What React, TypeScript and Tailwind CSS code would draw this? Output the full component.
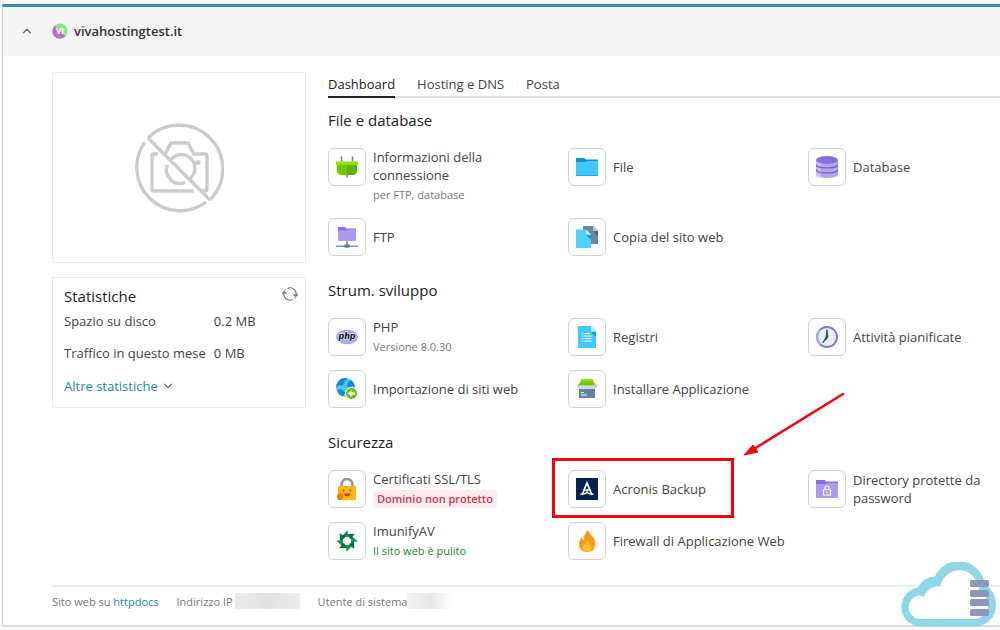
import React from 'react';
import { ChevronDown, ChevronUp } from 'lucide-react';

const PlugIcon = () => (
  <svg viewBox="0 0 22 22" className="w-[22px] h-[22px]">
    <path d="M5.500 0.500v5M16.500 0.500v5M11 18v3.500" stroke="#6f85a8" strokeWidth="1.600" />
    <path d="M1 9h20v6q0 3-4 4H5q-4-1-4-4z" fill="#72c800" />
    <path d="M11 9h10v6q0 3-4 4h-6z" fill="#62b300" />
    <path d="M0 5.500h22V9H0z" fill="#8be300" />
  </svg>
);

const FolderIcon = () => (
  <svg viewBox="0 0 22 22" className="w-[22px] h-[22px]">
    <path d="M0 2h8.500l1.500 1.500h12V8H0z" fill="#0d93dd" />
    <path d="M0 6h9l1.500-1H22v15H0z" fill="#40c8ff" />
    <path d="M0 19h22v1H0z" fill="#28a4df" />
  </svg>
);

const DatabaseIcon = () => (
  <svg viewBox="0 0 22 22" className="w-[22px] h-[22px]">
    <path d="M0 4v14.500C0 20.500 5 22 11 22s11-1.500 11-3.500V4z" fill="#b4a2f2" />
    <path d="M0 4v14.500C0 20 2 21 5 21.500V4z" fill="#cbbcff" />
    <path d="M0 8.500c0 4.500 22 4.500 22 0M0 13.500c0 4.500 22 4.500 22 0" fill="none" stroke="#7361c7" strokeWidth="1.400" />
    <ellipse cx="11" cy="4" rx="11" ry="3.900" fill="#8770dd" />
  </svg>
);

const FtpIcon = () => (
  <svg viewBox="0 0 22 22" className="w-[22px] h-[22px]">
    <path d="M2 1h7l1.500 1.500H20V7H2z" fill="#8770dd" />
    <path d="M2 4.500h8l1-1h9V15H2z" fill="#ad9bf0" />
    <path d="M11 15v4M0 20.300h22" stroke="#7c96b3" strokeWidth="1.600" />
    <path d="M8.500 18.500h5v3.200h-5z" fill="#617a98" />
  </svg>
);

const CopyIcon = () => (
  <svg viewBox="0 0 22 22" className="w-[22px] h-[22px]">
    <path d="M7 0h10l5 5v13H7z" fill="#71839f" />
    <path d="M17 5h5v6z" fill="#526580" />
    <path d="M17 0l5 5h-5z" fill="#b8c5d8" />
    <path d="M0 3.500h10l5 5V22H0z" fill="#4dd1ff" />
    <path d="M10 9h5v5z" fill="#159bd4" />
    <path d="M10 3.500l5 5h-5z" fill="#c5f0ff" />
  </svg>
);

const PhpIcon = () => (
  <svg viewBox="0 0 22 22" className="w-[22px] h-[22px]">
    <ellipse cx="11" cy="11" rx="11" ry="7.300" fill="#a5aaf3" />
    <text x="11" y="13" textAnchor="middle" fontSize="8" fontWeight="700" fontStyle="italic" fontFamily="'DejaVu Sans', sans-serif" fill="#111" stroke="#fff" strokeWidth="0.800" paintOrder="stroke">
      php
    </text>
  </svg>
);

const LogIcon = () => (
  <svg viewBox="0 0 22 22" className="w-[22px] h-[22px]">
    <path d="M2 0h13l5 5v17H2z" fill="#40c8ff" />
    <path d="M15 6h5v5z" fill="#1a94d1" />
    <path d="M15 0l5 5.500h-5z" fill="#bcebff" />
    <path d="M8.500 7.500h5M8.500 10h7M8.500 12.500h7M8.500 15h7" stroke="#fff" strokeWidth="1" />
    <path d="M6 7.500h1.200M6 10h1.200M6 12.500h1.200M6 15h1.200" stroke="#fff" strokeWidth="1" />
  </svg>
);

const ClockIcon = () => (
  <svg viewBox="0 0 22 22" className="w-[22px] h-[22px]">
    <circle cx="11" cy="11" r="10" fill="#e9effa" stroke="#8672d8" strokeWidth="1.900" />
    <path d="M4 18A10 10 0 0 1 4 4" fill="none" stroke="#b3a2f3" strokeWidth="1.900" />
    <path d="M11 3.500l1 7.500-1 1.500-4.500 4.500L10 11z" fill="#34475f" stroke="#34475f" strokeWidth="0.800" />
  </svg>
);

const GlobeIcon = () => (
  <svg viewBox="0 0 22 22" className="w-[22px] h-[22px]">
    <circle cx="9.500" cy="9.500" r="9.500" fill="#4cc7fb" />
    <path d="M3 2.500Q6-.5 10 0l1 2-3 1 1 2-3 3-3-1-2 2-.8-1Q1 4.500 3 2.500zM12 4l3-2q3 2 4 7l-3-1-2 2-3-2zM3 11l4 1 2 3-2 3.500Q3 17 1.500 13z" fill="#1c88cf" />
    <circle cx="15.500" cy="15.500" r="6" fill="#6dc20a" stroke="#fff" strokeWidth="1" />
    <path d="M11.800 15.500l3.700-3.200v2h3.500v2.400h-3.500v2z" fill="#fff" />
  </svg>
);

const BoxIcon = () => (
  <svg viewBox="0 0 22 22" className="w-[22px] h-[22px]">
    <path d="M3 5h16l3 3-3 2H3L1 8z" fill="#b8c7da" />
    <path d="M5.500 1h11L19 7.500H3z" fill="#74c600" />
    <path d="M5.500 1h11l.8 2.500H4.500z" fill="#91e020" />
    <path d="M3 7.500h16V12H3z" fill="#d0d9e7" />
    <path d="M3 11h16v9H3z" fill="#66809f" />
    <path d="M5 14.500h3M5 17h6" stroke="#fff" strokeWidth="1" />
  </svg>
);

const LockIcon = () => (
  <svg viewBox="0 0 22 22" className="w-[22px] h-[22px]">
    <path d="M5.500 9V6.500a5.500 5.500 0 0 1 11 0V9" fill="none" stroke="#8a979f" strokeWidth="2.600" />
    <path d="M2 8h18v14H2z" fill="#fdb913" />
    <circle cx="7.500" cy="12.500" r="0.900" fill="#71421a" />
    <circle cx="14.500" cy="12.500" r="0.900" fill="#71421a" />
    <path d="M8 15.500h6.500q-.5 3-3.200 3T8 15.500z" fill="#d63b25" />
    <path d="M1 16.500l2-.5 1-2q1.500 0 1 2.500h2v3.500L5 22H2q-1.500-3-1-5.500z" fill="#ed820b" />
  </svg>
);

const AcronisIcon = () => (
  <svg viewBox="0 0 22 22" className="w-[22px] h-[22px]">
    <path d="M0 0h22v22H0z" fill="#03234f" />
    <path d="M6 17L11 5l5 12M8.300 12h5.400" fill="none" stroke="#fff" strokeWidth="1.700" />
    <path d="M4.500 16.200c4 0 6-1 7.500-2.500M17.500 16.200c-4 0-6-1-7.500-2.500" fill="none" stroke="#fff" strokeWidth="1.400" />
  </svg>
);

const ProtectedIcon = () => (
  <svg viewBox="0 0 22 22" className="w-[22px] h-[22px]">
    <path d="M0 2h8.500l1.500 1.500h12V8H0z" fill="#8770dd" />
    <path d="M0 6h9l1.500-1H22v15H0z" fill="#ad9bf0" />
    <path d="M7.500 11.500h7V17h-7zM9 11.500V10a2 2 0 0 1 4 0v1.500M11 13.500v1.500" fill="none" stroke="#fff" strokeWidth="1.100" />
  </svg>
);

const ImunifyIcon = () => (
  <svg viewBox="0 0 22 22" className="w-[22px] h-[22px]">
    {[0, 45, 90, 135, 180, 225, 270, 315].map((angle) => (
      <path key={angle} d="M6.500 5.500L11.500 0.200l.3 3.600 4.200 2.400-5.500 1z" fill={angle % 90 ? '#08713f' : '#159457'} transform={`rotate(${angle} 11 11)`} />
    ))}
  </svg>
);

const FlameIcon = () => (
  <svg viewBox="0 0 22 22" className="w-[22px] h-[22px]">
    <path d="M12 0c1 4 7.500 7.500 7.500 14 0 5-3.500 8-8.500 8s-8-3-8-7.500C3 11 4.500 8.500 6 7c0 2 .5 3 1.500 3.500C8 6 9 2.500 12 0z" fill="#ff9a16" />
    <path d="M11.500 10c.5 3 4 4 4 7.500 0 2.500-2 4-4.500 4s-4.300-1.500-4.300-4c0-2 1-3 1.600-4 .5 1 1 1.500 1.700 1.500.2-2 .5-3.500 1.500-5z" fill="#ffc72c" />
  </svg>
);

const NoPhotoIcon = () => (
  <svg viewBox="0 0 90 90" className="w-[90px] h-[90px]" fill="none" stroke="#cbcbcb" strokeWidth="3.300">
    <path d="M14 15L76 77" />
    <path d="M14 15A43.300 43.300 0 1 1 76 77M72 79.100A43.300 43.300 0 0 1 11 19" />
    <path d="M24 31h-4q-2 0-2 2v33q0 2 2 2h40M31 31l6-11h17l6 11h11q2 0 2 2v33q0 2-2 2h-4" />
    <path d="M37 36.500A13.500 13.500 0 1 1 56 55.500M33.500 42A13.500 13.500 0 0 0 51 59.500" />
    <circle cx="64" cy="39.500" r="2.500" fill="#cbcbcb" stroke="none" />
  </svg>
);

const RefreshIcon = () => (
  <svg viewBox="0 0 16 16" className="w-4 h-4" fill="none" stroke="#666" strokeWidth="1.100">
    <path d="M5.500 2.500A6 6 0 0 1 13.800 9.800M10.500 13.500A6 6 0 0 1 2.200 6.200M3 4.500L2.700 3.500M13.300 11.500l-.3 1" />
    <path d="M11.500 8.500l2.300 1.800 2-2M.3 7.500l1.900-1.800 2.300 2" />
  </svg>
);

const CloudLogo = () => (
  <svg viewBox="0 0 98 66" className="w-[98px] h-[66px]">
    <path d="M19.500 64.500A19.700 19.700 0 0 1 19 25.500 19 19 0 0 1 36 14.500 26 26 0 0 1 85.500 22Q97 29 97 43A21 21 0 0 1 77 64.500z" fill="#8fd6e7" />
    <path d="M19.500 57A12 12 0 0 1 19 33.500q3-.5 6 1.500A15 15 0 0 1 41.500 24.500 19 19 0 0 1 79 24l2 6q8 5 8 13a14 14 0 0 1-13 14z" fill="#fff" />
    {[18, 28, 37, 47].map((y) => (
      <rect key={y} x="71" y={y} width="19" height="7" rx="1.500" fill="#8b95bf" />
    ))}
  </svg>
);

interface Tool {
  label: string;
  icon: React.FC;
  note?: string;
  status?: 'danger' | 'ok';
  highlighted?: boolean;
}

const sections: { title: string; tools: Tool[] }[] = [
  {
    title: 'File e database',
    tools: [
      { label: 'Informazioni della connessione', icon: PlugIcon, note: 'per FTP, database' },
      { label: 'File', icon: FolderIcon },
      { label: 'Database', icon: DatabaseIcon },
      { label: 'FTP', icon: FtpIcon },
      { label: 'Copia del sito web', icon: CopyIcon },
    ],
  },
  {
    title: 'Strum. sviluppo',
    tools: [
      { label: 'PHP', icon: PhpIcon, note: 'Versione 8.0.30' },
      { label: 'Registri', icon: LogIcon },
      { label: 'Attività pianificate', icon: ClockIcon },
      { label: 'Importazione di siti web', icon: GlobeIcon },
      { label: 'Installare Applicazione', icon: BoxIcon },
    ],
  },
  {
    title: 'Sicurezza',
    tools: [
      { label: 'Certificati SSL/TLS', icon: LockIcon, note: 'Dominio non protetto', status: 'danger' },
      { label: 'Acronis Backup', icon: AcronisIcon, highlighted: true },
      { label: 'Directory protette da password', icon: ProtectedIcon },
      { label: 'ImunifyAV', icon: ImunifyIcon, note: 'Il sito web è pulito', status: 'ok' },
      { label: 'Firewall di Applicazione Web', icon: FlameIcon },
    ],
  },
];

const noteStyles = {
  plain: 'text-[#777]',
  danger: 'self-start rounded-sm bg-[#fdecee] px-1 font-semibold text-[#c93a56]',
  ok: 'text-[#218c21]',
};

const ToolLink: React.FC<{ tool: Tool }> = ({ tool }) => {
  const Icon = tool.icon;

  return (
    <div className="relative pr-4">
      <a href="#" className="flex items-start gap-[7px]">
        <span className="flex h-[38px] w-[38px] shrink-0 items-center justify-center rounded-md border border-[#d2d2d2] bg-white">
          <Icon />
        </span>
        <span className="flex min-h-[38px] flex-col justify-center gap-0.5">
          <span>{tool.label}</span>
          {tool.note && (
            <span className={`text-[11px] leading-[18px] ${noteStyles[tool.status ?? 'plain']}`}>{tool.note}</span>
          )}
        </span>
      </a>
      {tool.highlighted && (
        <>
          <span className="pointer-events-none absolute -left-4 -top-3 h-[60px] w-[182px] border-3 border-[#f5000c]" />
          <svg viewBox="0 0 104 66" className="pointer-events-none absolute -top-20 left-[174px] h-[66px] w-[104px]">
            <path d="M101 4L12 59" stroke="#f5000c" strokeWidth="2.500" strokeLinecap="round" />
            <path d="M2 65l9-10 2 3 3 4z" fill="#f5000c" stroke="#f5000c" strokeWidth="1" />
          </svg>
        </>
      )}
    </div>
  );
};

const App: React.FC = () => {
  return (
    <div className="relative min-h-screen overflow-hidden bg-[#fafafa] pl-0.5 pt-1 font-['Open_Sans',sans-serif] text-[13px] leading-[18px] text-[#444]">
      <div className="border-b-2 border-l border-t-3 border-b-[#dcdcdc] border-l-[#ccc] border-t-[#36919f] bg-white">
        {/* Domain header */}
        <header className="flex h-[49px] items-center bg-[#f4f4f4] pb-0.5 pl-[17px]">
          <button type="button" aria-label="Comprimi" className="mr-[18px] text-[#666]">
            <ChevronUp size={14} strokeWidth={2} />
          </button>
          <svg viewBox="0 0 16 16" className="mr-1.5 h-4 w-4">
            <circle cx="8" cy="8" r="7.500" fill="#8ee58c" />
            <path d="M2.700 2.700A7.500 7.500 0 1 0 13.300 13.300z" fill="#bd6bd0" />
            <text x="8" y="11" textAnchor="middle" fontSize="8" fontWeight="700" fill="#fff">
              VI
            </text>
          </svg>
          <h1 className="font-semibold text-[#333]">vivahostingtest.it</h1>
        </header>

        <div className="flex gap-[22px] pl-[49px] pt-4">
          {/* Preview and statistics */}
          <aside className="w-[254px] shrink-0">
            <div className="mb-3.5 flex h-[191px] items-center justify-center border border-[#ebebeb]">
              <NoPhotoIcon />
            </div>
            <div className="border border-[#ebebeb] px-[11px] pb-3 pt-2">
              <div className="mb-1.5 flex items-start justify-between">
                <h2 className="text-[15px] font-medium leading-5 text-[#222]">Statistiche</h2>
                <button type="button" aria-label="Aggiorna" className="-mr-1">
                  <RefreshIcon />
                </button>
              </div>
              <dl className="mb-[15px] grid grid-cols-[auto_1fr] gap-x-2 gap-y-3.5">
                <dt>Spazio su disco</dt>
                <dd>0.2 MB</dd>
                <dt>Traffico in questo mese</dt>
                <dd>0 MB</dd>
              </dl>
              <button type="button" className="flex items-center gap-[3px] text-[#2389ad]">
                Altre statistiche
                <ChevronDown size={14} strokeWidth={2} className="text-[#666]" />
              </button>
            </div>
          </aside>

          {/* Tools */}
          <main className="min-w-0 flex-1 pt-[3px]">
            <nav className="mb-3 flex gap-[22px] border-b-2 border-[#dedede]">
              <a href="#" className="-mb-0.5 border-b-2 border-[#222] pb-[3px] font-medium text-[#222]">Dashboard</a>
              <a href="#" className="pb-[3px]">Hosting e DNS</a>
              <a href="#" className="pb-[3px]">Posta</a>
            </nav>
            <div className="flex flex-col gap-6">
              {sections.map((section) => (
                <section key={section.title}>
                  <h2 className="mb-[18px] text-[15px] font-medium leading-5 text-[#222]">{section.title}</h2>
                  <div className="grid grid-cols-[5fr_5fr_4fr] gap-y-3.5">
                    {section.tools.map((tool) => (
                      <ToolLink key={tool.label} tool={tool} />
                    ))}
                  </div>
                </section>
              ))}
            </div>
          </main>
        </div>

        <footer className="ml-[49px] mt-[25px] flex gap-[18px] border-t-2 border-[#ededed] pb-3.5 pt-1.5 text-[11px] text-[#777]">
          <span>
            Sito web su <a href="#" className="text-[#2389ad]">httpdocs</a>
          </span>
          <span className="flex gap-0.5">
            Indirizzo IP
            <span className="h-4 w-[65px] bg-linear-to-r from-[#ececec] via-[#e2e2e2] to-[#ececec]" />
          </span>
          <span className="flex">
            Utente di sistema
            <span className="h-4 w-[46px] bg-linear-to-r from-[#f3f3f3] via-[#e6e6e6] to-white" />
          </span>
        </footer>
      </div>

      <div className="absolute right-[3px] top-[562px]">
        <CloudLogo />
      </div>
    </div>
  );
};

export default App;
